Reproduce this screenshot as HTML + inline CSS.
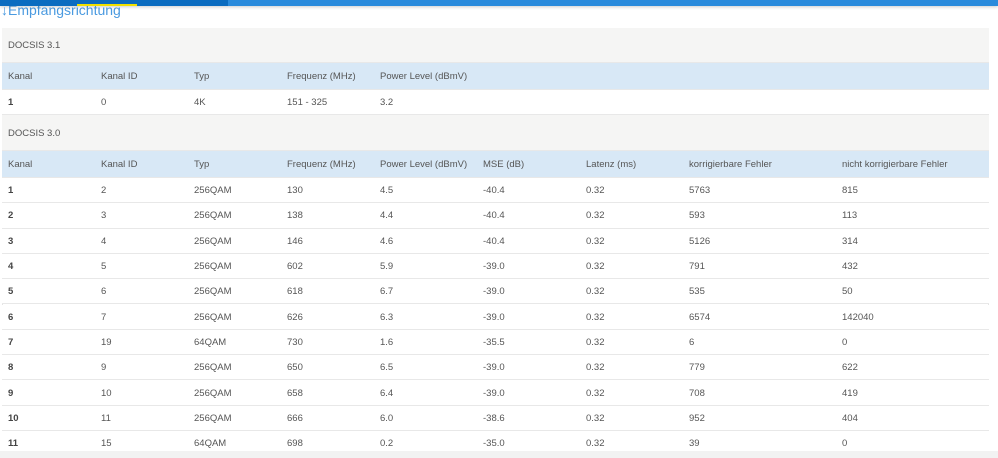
<!DOCTYPE html><html><head><style>
body{margin:0;width:998px;height:458px;overflow:hidden;background:#fff;font-family:"Liberation Sans",sans-serif;font-size:9.5px;color:#555;position:relative}
.a{position:absolute}
.r{position:absolute;left:2px;width:987px;border-bottom:1px solid #e8e8e8;box-sizing:border-box}
.r span{position:absolute;top:50%;transform:translateY(-45%);white-space:nowrap}
b{font-weight:bold;color:#444}
</style></head><body>
<div class="a" style="left:1px;top:2px;font-size:14px;color:#4a9ae0">↓Empfangsrichtung</div>
<div class="a" style="left:0;top:0;width:998px;height:6px;background:#2a8bdc;box-shadow:0 1px 3px rgba(0,0,0,.2)"></div>
<div class="a" style="left:0;top:0;width:228px;height:6px;background:#0b6cc0"></div>
<div class="a" style="left:77px;top:4px;width:60px;height:2px;background:#f0e000"></div>
<div class="a" style="left:2px;top:28px;width:987px;height:423px;border:1px solid #e4e4e4;box-sizing:border-box"></div>
<div id="t"></div>
<div class="a" style="left:0;top:451px;width:998px;height:7px;background:#f2f2f2"></div>
<script>
var X=[8,101,194,287,380,483,586,689,842],h='';
function row(top,ht,bg,cells,bold){h+='<div class="r" style="top:'+top+'px;height:'+ht+'px;background:'+bg+'">';cells.forEach(function(c,i){h+='<span style="left:'+(X[i]-2)+'px">'+(i==0&&bold?'<b>'+c+'</b>':c)+'</span>'});h+='</div>';}
row(28,35,'#f5f5f4',['DOCSIS 3.1']);
row(63,27,'#d8e8f6',['Kanal','Kanal ID','Typ','Frequenz (MHz)','Power Level (dBmV)']);
row(90,25,'#fff',['1','0','4K','151 - 325','3.2'],1);
row(115,36,'#f5f5f4',['DOCSIS 3.0']);
row(151,27,'#d8e8f6',['Kanal','Kanal ID','Typ','Frequenz (MHz)','Power Level (dBmV)','MSE (dB)','Latenz (ms)','korrigierbare Fehler','nicht korrigierbare Fehler']);
var d=[[1,2,'256QAM',130,'4.5','-40.4',5763,815],[2,3,'256QAM',138,'4.4','-40.4',593,113],[3,4,'256QAM',146,'4.6','-40.4',5126,314],[4,5,'256QAM',602,'5.9','-39.0',791,432],[5,6,'256QAM',618,'6.7','-39.0',535,50],[6,7,'256QAM',626,'6.3','-39.0',6574,142040],[7,19,'64QAM',730,'1.6','-35.5',6,0],[8,9,'256QAM',650,'6.5','-39.0',779,622],[9,10,'256QAM',658,'6.4','-39.0',708,419],[10,11,'256QAM',666,'6.0','-38.6',952,404],[11,15,'64QAM',698,'0.2','-35.0',39,0]];
d.forEach(function(r,k){row(178+k*25.3,25.3,'#fff',[r[0],r[1],r[2],r[3],r[4],r[5],'0.32',r[6],r[7]],1)});
document.getElementById('t').innerHTML=h;
</script>
</body></html>
